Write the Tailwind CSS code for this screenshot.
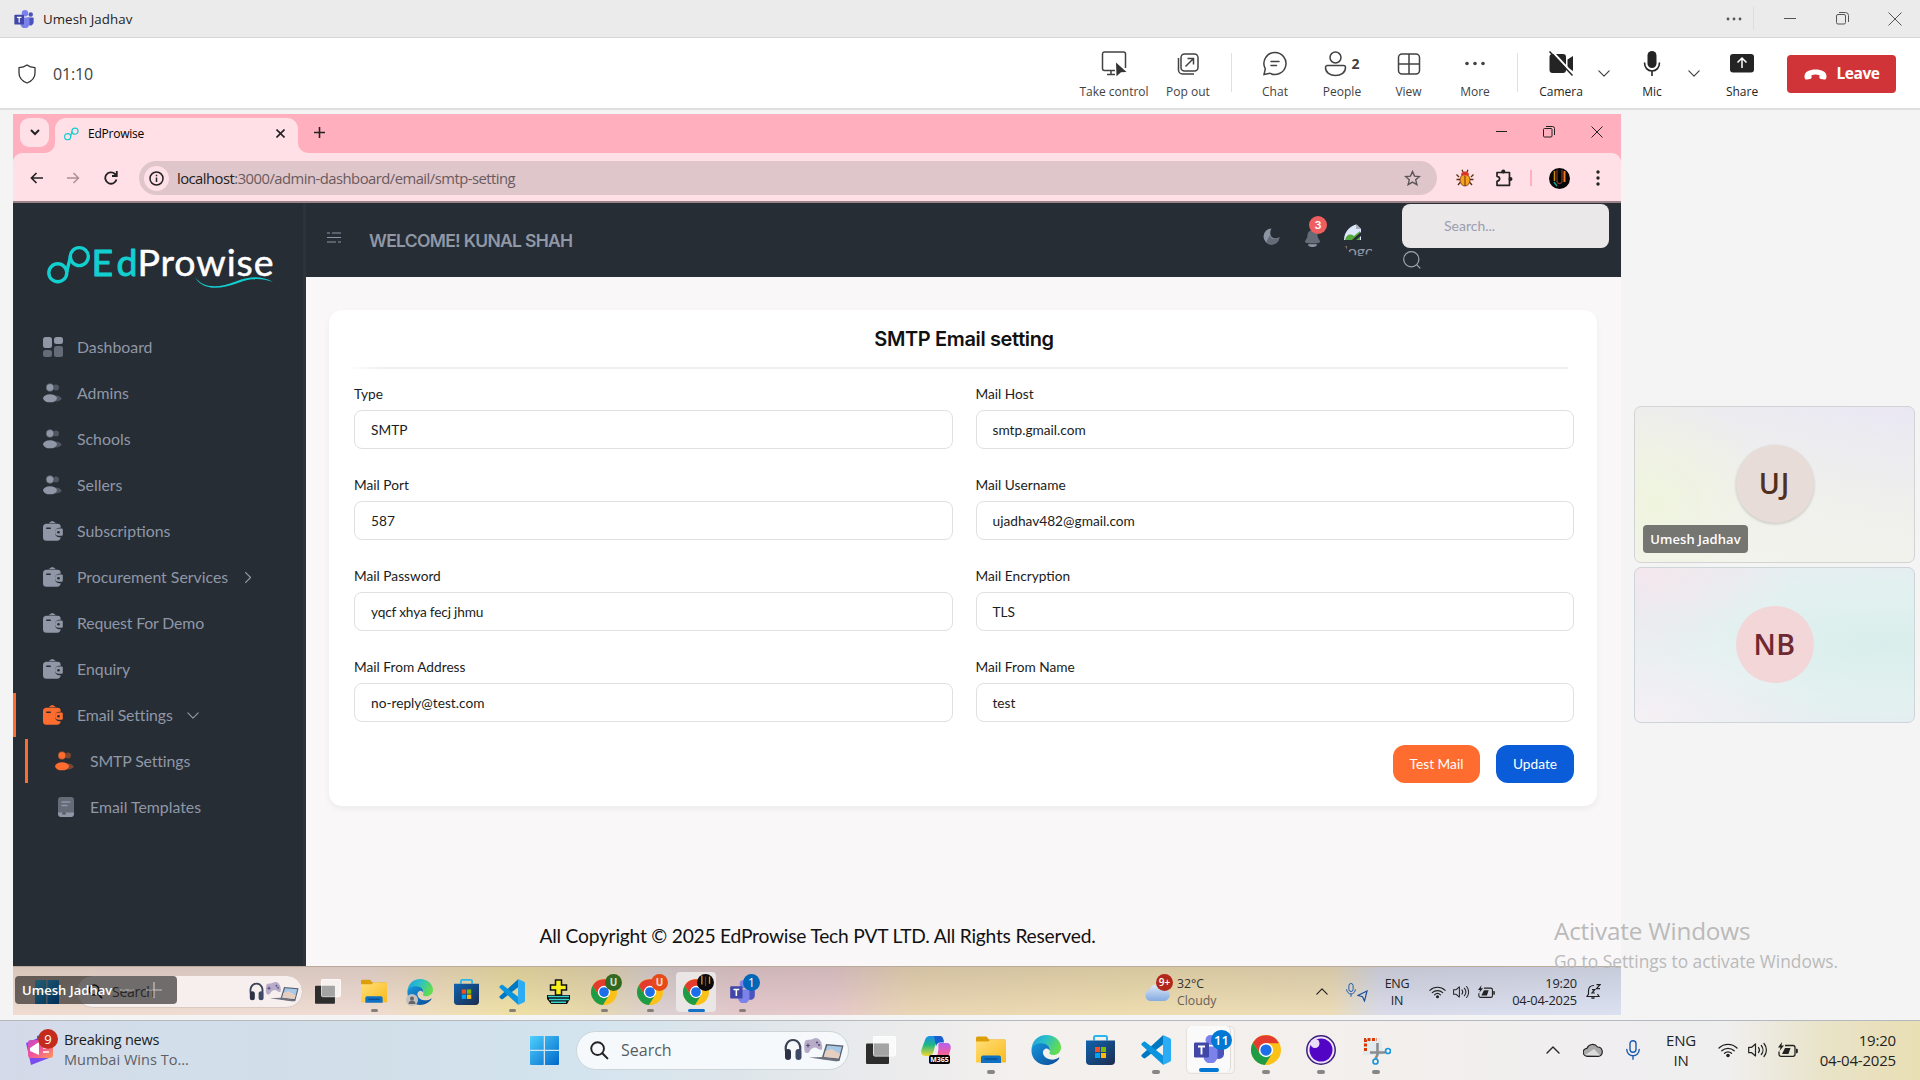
<!DOCTYPE html>
<html lang="en">
<head>
<meta charset="utf-8">
<title>Umesh Jadhav</title>
<script src="https://cdn.jsdelivr.net/npm/@tailwindcss/browser@4"></script>
</head>
<body class="w-[1920px] h-[1080px] overflow-hidden bg-[#f4f4f4] flex flex-col font-['Open_Sans',sans-serif] text-[#242424]">
<svg width="0" height="0" class="absolute">
  <defs>
    <linearGradient id="gWin" x1="0" y1="0" x2="1" y2="1"><stop offset="0" stop-color="#4fd0ff"/><stop offset="1" stop-color="#0067c9"/></linearGradient>
    <linearGradient id="gFold" x1="0" y1="0" x2="1" y2="1"><stop offset="0" stop-color="#ffdf7a"/><stop offset="1" stop-color="#fbba1c"/></linearGradient>
    <linearGradient id="gEdgeT" x1="0" y1="0" x2="1" y2=".4"><stop offset="0" stop-color="#1b9de2"/><stop offset=".5" stop-color="#2cc0c8"/><stop offset="1" stop-color="#62dc50"/></linearGradient>
    <linearGradient id="gEdgeB" x1="0" y1="0" x2="1" y2="1"><stop offset="0" stop-color="#1597dd"/><stop offset="1" stop-color="#0c4a97"/></linearGradient>
    <linearGradient id="gStore" x1="0" y1="0" x2="1" y2="1"><stop offset="0" stop-color="#0f63ad"/><stop offset="1" stop-color="#1d2c50"/></linearGradient>
    <linearGradient id="gCopA" x1="0" y1="0" x2="0" y2="1"><stop offset="0" stop-color="#1a8cf0"/><stop offset=".45" stop-color="#1eb980"/><stop offset="1" stop-color="#f5d62c"/></linearGradient>
    <linearGradient id="gCopB" x1="0" y1="0" x2="0" y2="1"><stop offset="0" stop-color="#b45ff0"/><stop offset=".5" stop-color="#ef5fa8"/><stop offset="1" stop-color="#ff8a3c"/></linearGradient>
    <linearGradient id="gNews" x1="0" y1="0" x2="1" y2="1"><stop offset="0" stop-color="#c44cc8"/><stop offset=".5" stop-color="#f2559a"/><stop offset="1" stop-color="#ff9a50"/></linearGradient>
    <linearGradient id="gCloud" x1="0" y1="0" x2="0" y2="1"><stop offset="0" stop-color="#dfeaf8"/><stop offset="1" stop-color="#84abe2"/></linearGradient>
  </defs>
  <symbol id="win" viewBox="0 0 29 29"><path fill="url(#gWin)" d="M0 1a1 1 0 0 1 1-1h12.7v13.7H0zM15 0h13a1 1 0 0 1 1 1v12.7H15zM0 15h13.7v14H1a1 1 0 0 1-1-1zM15 15h14v13a1 1 0 0 1-1 1H15z"/></symbol>
  <symbol id="mag" viewBox="0 0 20 20"><circle cx="8" cy="8" r="6.700" fill="none" stroke="#222" stroke-width="2"/><path d="M13 13l5.300 5.300" stroke="#222" stroke-width="2.200" stroke-linecap="round"/></symbol>
  <symbol id="gear" viewBox="0 0 60 26">
    <path d="M2.500 16C0 8 4 3 9 3s9 5 6.500 13" fill="none" stroke="#3b4255" stroke-width="2.200"/><rect x="1" y="12" width="6" height="11" rx="3" fill="#2d3345"/><rect x="11.500" y="12" width="6" height="11" rx="3" fill="#3f4a68"/>
    <path d="M21 4c2-2 4-1 6-1.500s4-2.500 7-1c3 1.500 5 7 4 11-2 1.500-5-2-7-2s-4 1-5.500 4c-1 2-4 2-4.800 0C20 12 20 7 21 4z" fill="#b7acc8"/><path d="M24 6.500v4M22 8.500h4" stroke="#5a4a80" stroke-width="1.200"/><circle cx="33" cy="5.500" r="1.100" fill="#5a4a80"/><circle cx="35" cy="8" r="1.100" fill="#5a4a80"/>
    <path d="M42 7l17.500 1.500-4 15.500-18-2z" fill="#5d6270"/><path d="M43.300 8.500l14.600 1.300-3.200 11.500-15-1.600z" fill="#a7c9e8"/><path d="M41.500 14l6-2 8.500 5-1.500 4.500-14.500-1.500z" fill="#e6cfc0"/><path d="M25 20.500l13-.5 17 3-2 1.500z" fill="#6f7380"/>
  </symbol>
  <symbol id="tview" viewBox="0 0 30 28"><rect y="7.500" width="23" height="20.500" rx="1" fill="#2d2d2d"/><rect x="7.500" width="22" height="20" rx="1.500" fill="#fff" fill-opacity=".72" stroke="#fff"/><rect x="7.500" y="7.500" width="15.500" height="12.500" fill="#8a8a8a" fill-opacity=".55"/></symbol>
  <symbol id="folder" viewBox="0 0 30 28"><path d="M0 2a1.500 1.500 0 0 1 1.500-1.500h9L13 3.500h15.500A1.500 1.500 0 0 1 30 5v6H0z" fill="#dc9f0a"/><path d="M0 5.500h12l3-2h13.500A1.500 1.500 0 0 1 30 5v21.500H0z" fill="url(#gFold)"/><path d="M5 27v-5.500a2 2 0 0 1 2-2h16a2 2 0 0 1 2 2V27z" fill="#0f71c4"/><path d="M8.500 23h13" stroke="#0b4c8f" stroke-width="1.400"/></symbol>
  <symbol id="edge" viewBox="0 0 30 30"><path d="M.5 16C.2 6 7 0 15.500 0 24 0 30 6 30 12.500c0 5-4 7.500-7.500 7.500-3 0-4.500-1-4-2.200C20.500 14 18 9.500 12 9.500 6 9.500 1 12 .5 16z" fill="url(#gEdgeT)"/><path d="M.5 16C.5 11 5 8.300 10 8.300c5.500 0 9.500 3.200 8.800 7.700C18 14 16 13 14 14c-4 2-2 9.500 5.500 10.500 3.500.5 6-.5 8-1.800.8-.4 1 .2.700.8C25.500 27.500 20.500 30 15.500 30 7.500 30 .5 24 .5 16z" fill="url(#gEdgeB)"/></symbol>
  <symbol id="store" viewBox="0 0 29 30"><path d="M8 5.500V2.500A1.500 1.500 0 0 1 9.500 1h10A1.500 1.500 0 0 1 21 2.500v3" fill="none" stroke="#29b6ef" stroke-width="2"/><path d="M0 5.500h29V26a4 4 0 0 1-4 4H4a4 4 0 0 1-4-4z" fill="url(#gStore)"/><path fill="#f25022" d="M9 12h5v5H9z"/><path fill="#7fba00" d="M15 12h5v5h-5z"/><path fill="#00a4ef" d="M9 18h5v5H9z"/><path fill="#ffb900" d="M15 18h5v5h-5z"/></symbol>
  <symbol id="code" viewBox="0 0 30 30"><path d="M22 .3L1 19.500c-.8.800-.8 1.700 0 2.400l1.500 1.200c.7.500 1.300.4 2 0L22 9.500z" fill="#0078c1"/><path d="M22 29.700L1 10.500c-.8-.8-.8-1.700 0-2.400l1.500-1.200c.7-.5 1.300-.4 2 0L22 20.500z" fill="#0a94de"/><path d="M22 0l7 3.200a2 2 0 0 1 1 1.700v20.200a2 2 0 0 1-1 1.700L22 30z" fill="#2bacf4"/></symbol>
  <symbol id="chrome" viewBox="0 0 24 24"><circle cx="12" cy="12" r="12" fill="#fbc116"/><path d="M1.600 6A12 12 0 0 0 11 24l5.800-9.300L12 12l-4.800 2.700z" fill="#1e9b45"/><path d="M1.600 6A12 12 0 0 1 22.400 6.500H12V12l-4.800 2.700z" fill="#e33b2e"/><circle cx="12" cy="12" r="5.700" fill="#fff"/><circle cx="12" cy="12" r="4.500" fill="#1c6fe8"/></symbol>
  <symbol id="teams" viewBox="0 0 30 28"><circle cx="25.500" cy="7" r="3.500" fill="#4b53bc"/><circle cx="16.500" cy="5" r="5" fill="#7b83eb"/><path d="M20 11.500h8.500A1.500 1.500 0 0 1 30 13v6.500a5 5 0 0 1-8 3.500z" fill="#4b53bc"/><path d="M9 11.500h14.500V21a7 7 0 0 1-14 1z" fill="#7b83eb"/><rect y="7.500" width="15" height="15" rx="1.300" fill="#4147a8"/><path d="M4 11.500h7M7.500 11.500v8" stroke="#fff" stroke-width="1.900"/></symbol>
  <symbol id="copilot" viewBox="0 0 30 28"><path d="M9 0h9c3 0 4 2 4.500 5H18c-3 0-3.500 3-4.500 7s-2 8-5.500 8H4c-3 0-4.500-3-3.500-6.500L4 4C5 1 6.500 0 9 0z" fill="url(#gCopA)"/><path d="M13 0h5.500c3 0 4 2 4.500 6.500h-4c-2 0-3 1-4 4z" fill="#1a5fd0"/><path d="M18.500 7H26c3 0 4.500 3 3.500 6.500L27 22c-1 3-2 4-4.500 4H12c4-1 4-6 5-10s-.5-9 1.500-9z" fill="url(#gCopB)"/></symbol>
  <symbol id="wifi" viewBox="0 0 20 16"><g fill="none" stroke="#222" stroke-width="1.300" stroke-linecap="round"><path d="M1 6a13 13 0 0 1 18 0M3.800 8.800a9 9 0 0 1 12.400 0M6.500 11.300a5.200 5.200 0 0 1 7 0"/></g><circle cx="10" cy="13.500" r="1.800" fill="#222"/></symbol>
  <symbol id="vol" viewBox="0 0 20 16"><g fill="none" stroke="#222" stroke-width="1.200" stroke-linecap="round" stroke-linejoin="round"><path d="M.7 5.300h3L7.500 2v12L3.700 10.700h-3zM10.500 5.500a4 4 0 0 1 0 5M13.300 3.500a7 7 0 0 1 0 9M16 1.500a10 10 0 0 1 0 13"/></g></symbol>
  <symbol id="bat" viewBox="0 0 20 16"><path d="M7 3.500h8a2 2 0 0 1 2 2v6.800a2 2 0 0 1-2 2H3a2 2 0 0 1-2-2V9.500" fill="none" stroke="#222" stroke-width="1.300"/><path d="M18 6.700h.8a1 1 0 0 1 1 1v2.600a1 1 0 0 1-1 1H18z" fill="#222"/><path d="M4 12l3-6h5.500L10.500 12z" fill="#222"/><path d="M4 0L0 5.500h2.500L1.500 9 6 3.500H3.500z" fill="#222"/></symbol>
  <symbol id="micb" viewBox="0 0 14 20"><rect x="4" y=".7" width="6" height="11.500" rx="3" fill="none" stroke="#1d5bb0" stroke-width="1.400"/><path d="M.8 9.500a6.200 6.200 0 0 0 12.400 0M7 15.800v3.500" fill="none" stroke="#1d5bb0" stroke-width="1.400" stroke-linecap="round"/></symbol>
  <symbol id="users" viewBox="0 0 20 20"><circle cx="13" cy="4.500" r="3" fill="currentColor" opacity=".4"/><ellipse cx="12.500" cy="15.500" rx="6" ry="3" fill="currentColor" opacity=".4"/><circle cx="7" cy="4.500" r="3.900" fill="currentColor" stroke="#262d34" stroke-width=".4"/><ellipse cx="7" cy="15.300" rx="6.900" ry="4" fill="currentColor"/></symbol>
  <symbol id="wallet" viewBox="0 0 20 20"><path d="M5.500 2.200L8.200.4a2 2 0 0 1 2.200 0l2.700 1.800z" fill="currentColor"/><path d="M3.500 2.700h11a3.200 3.200 0 0 1 3.200 3.200v.8h-1.800a4.900 4.900 0 0 0 0 9.600h1.800a3.800 3.800 0 0 1-3.700 3.500H3.500A3.500 3.500 0 0 1 0 16.300V6.200a3.500 3.500 0 0 1 3.500-3.500z" fill="currentColor"/><rect x="3" y="6.400" width="5" height="1.600" rx=".8" fill="#262d34"/><path d="M15.600 7.600h3.200a1 1 0 0 1 1 1v5.200a1 1 0 0 1-1 1h-3.200a3.600 3.600 0 0 1 0-7.200z" fill="currentColor"/><circle cx="15.500" cy="11.200" r="1.300" fill="#262d34"/></symbol>
  <symbol id="inf" viewBox="0 0 44 40"><g fill="none" stroke="#12cfd0" stroke-width="3.400"><circle cx="10.800" cy="27.800" r="9"/><circle cx="32.300" cy="11.600" r="9"/><path d="M19.800 27c.5-4.500 2.700-9.500 3.700-16"/></g></symbol>
  <symbol id="chev" viewBox="0 0 14 8"><path d="M1 1l6 6 6-6" fill="none" stroke="currentColor" stroke-width="1.400" stroke-linecap="round" stroke-linejoin="round"/></symbol>
</svg>

<!-- Window title bar -->
<header class="h-[38px] shrink-0 bg-[#ebebeb] border-b border-[#d6d6d6] flex items-center pl-[14px]">
  <svg class="w-5 h-[18px]"><use href="#teams"/></svg>
  <span class="ml-[9px] mt-[2px] text-[13.300px] tracking-[0.004em]">Umesh Jadhav</span>
  <div class="ml-auto flex items-center text-[#555]">
    <svg width="16" height="4" viewBox="0 0 16 4" fill="#555"><circle cx="2" cy="2" r="1.400"/><circle cx="8" cy="2" r="1.400"/><circle cx="14" cy="2" r="1.400"/></svg>
    <div class="w-px h-[23px] bg-[#dcdcdc] ml-[11px]"></div>
    <svg class="ml-[30px]" width="12" height="12" viewBox="0 0 12 12"><path d="M0 5.500h12" stroke="#555"/></svg>
    <svg class="ml-[40px]" width="13" height="13" viewBox="0 0 13 13" fill="none" stroke="#555"><rect x=".5" y="2.500" width="9" height="9.500" rx="1.500"/><path d="M3 .5h6.500a3 3 0 0 1 3 3V10"/></svg>
    <svg class="ml-[39px] mr-[18px]" width="14" height="14" viewBox="0 0 14 14" stroke="#555"><path d="M.5.500l13 13M13.500.500l-13 13"/></svg>
  </div>
</header>

<!-- Call controls -->
<div class="h-[72px] shrink-0 bg-white border-b-2 border-[#dedede] flex items-center pl-[18px] pt-[2px]">
  <svg width="18" height="20" viewBox="0 0 18 20" fill="none" stroke="#333" stroke-width="1.300"><path d="M9 1c2.200 1.700 4.500 2.500 8 2.700V9c0 5-3 8-8 10-5-2-8-5-8-10V3.700C4.500 3.500 6.800 2.700 9 1z" stroke-linejoin="round"/></svg>
  <span class="ml-[17px] text-[16px] tracking-[-0.01em] text-[#424242]">01:10</span>
  <div class="ml-auto mt-[2px] flex text-[12px] leading-4 text-[#424242]">
    <div class="w-[80px] flex flex-col items-center gap-[7px]">
      <svg width="26" height="26" viewBox="0 0 26 26"><path d="M14 19.500H3.500a2 2 0 0 1-2-2V3a2 2 0 0 1 2-2h19a2 2 0 0 1 2 2v14M6 23.500h8M10 20v3.500" fill="none" stroke="#424242" stroke-width="1.500"/><path d="M15 11.500l10.500 9.500-5.500.3-4.500 4z" fill="#333"/></svg>
      <span>Take control</span></div>
    <div class="w-[68px] flex flex-col items-center gap-[7px]">
      <svg width="26" height="26" viewBox="0 0 26 26" fill="none" stroke="#424242" stroke-width="1.500"><rect x="6" y="3" width="17" height="17" rx="3.500"/><path d="M3.500 7v12a4 4 0 0 0 4 4H19M10.500 15.500l8-8M12.500 7.500h6v6"/></svg>
      <span>Pop out</span></div>
    <div class="w-px h-[39px] bg-[#e0e0e0] mx-[9px] mt-[2px]"></div>
    <div class="w-[68px] flex flex-col items-center gap-[7px]">
      <svg width="26" height="26" viewBox="0 0 26 26" fill="none" stroke="#424242" stroke-width="1.500"><path d="M13 1.500a11 11 0 1 1-5.200 20.700L2 23.500l1.300-5.700A11 11 0 0 1 13 1.500zM9 10.500h8M9 14.500h5.500" stroke-linecap="round"/></svg>
      <span>Chat</span></div>
    <div class="w-[66px] flex flex-col items-center gap-[7px]">
      <div class="flex items-center h-[26px]"><svg width="23" height="26" viewBox="0 0 23 26" fill="none" stroke="#424242" stroke-width="1.500"><circle cx="11.500" cy="6.500" r="5.500"/><path d="M3.500 14.500h16a2 2 0 0 1 2 2c0 5-4.500 8-10 8s-10-3-10-8a2 2 0 0 1 2-2z"/></svg><b class="font-bold text-[14px] ml-1">2</b></div>
      <span>People</span></div>
    <div class="w-[67px] flex flex-col items-center gap-[7px]">
      <svg width="26" height="26" viewBox="0 0 26 26" fill="none" stroke="#424242" stroke-width="1.500"><rect x="2.500" y="3" width="21" height="20" rx="3.500"/><path d="M13 3v20M2.500 13h21"/></svg>
      <span>View</span></div>
    <div class="w-[66px] flex flex-col items-center gap-[7px]">
      <svg width="26" height="26" viewBox="0 0 26 26" fill="#424242"><circle cx="5" cy="12.500" r="1.800"/><circle cx="13" cy="12.500" r="1.800"/><circle cx="21" cy="12.500" r="1.800"/></svg>
      <span>More</span></div>
    <div class="w-px h-[39px] bg-[#e0e0e0] mx-[9px] mt-[2px]"></div>
    <div class="w-[68px] flex flex-col items-center gap-[7px] text-[#242424]">
      <svg width="26" height="26" viewBox="0 0 26 26"><path d="M4.500 3H15a3 3 0 0 1 3 3v13a3 3 0 0 1-3 3H4.500a3 3 0 0 1-3-3V6a3 3 0 0 1 3-3zM19.500 8.500L25 5v15l-5.500-3.500z" fill="#242424"/><path d="M3-1l23 25" stroke="#fff" stroke-width="2"/><path d="M1.500.500l23 24" stroke="#242424" stroke-width="1.500"/></svg>
      <span>Camera</span></div>
    <svg class="w-3 h-[7px] mt-[19px] ml-[3px]"><use href="#chev"/></svg>
    <div class="w-[60px] ml-[12px] flex flex-col items-center gap-[7px] text-[#242424]">
      <svg width="26" height="26" viewBox="0 0 26 26"><rect x="8.500" y="0" width="9" height="17" rx="4.500" fill="#242424"/><path d="M5.500 11.500c0 5 3 8.500 7.500 8.500s7.500-3.500 7.500-8.500M13 20v5" fill="none" stroke="#242424" stroke-width="1.600"/></svg>
      <span>Mic</span></div>
    <svg class="w-3 h-[7px] mt-[19px] ml-[6px]"><use href="#chev"/></svg>
    <div class="w-[60px] ml-[12px] flex flex-col items-center gap-[7px] text-[#242424]">
      <svg width="26" height="26" viewBox="0 0 26 26"><rect x="1" y="3" width="24" height="18.500" rx="3" fill="#242424"/><path d="M13 17V7.500M8.500 11.500L13 7l4.500 4.500" fill="none" stroke="#fff" stroke-width="1.500"/></svg>
      <span>Share</span></div>
  </div>
  <button class="ml-[15px] mr-[24px] w-[109px] h-[38px] rounded-[4px] bg-[#d13438] text-white font-bold text-[15.500px] tracking-[-0.03em] flex items-center justify-center gap-[10px]">
    <svg width="23" height="11" viewBox="0 0 23 11"><path d="M.5 7.500C.5 2.500 5.500.500 11.500.500s11 2 11 7c0 2.500-1 3.300-2.500 3l-3-.6c-1.200-.3-1.700-1-1.600-2l.1-1.700a12 12 0 0 0-8 0l.1 1.700c.1 1-.4 1.700-1.600 2l-3 .6C1.500 10.800.5 10 .5 7.500z" fill="#fff"/></svg>
    Leave</button>
</div>

<!-- Stage: shared screen and participants -->
<main class="h-[910px] shrink-0 flex pt-[4px] pl-[13px]">
  <section class="w-[1608px] h-[901px] shrink-0 flex flex-col relative">
    <!-- Browser tab strip -->
    <div class="h-[39px] shrink-0 bg-[#ffafbe] flex items-center pl-[7px] pr-[18px] text-black">
      <div class="w-[29px] h-[29px] rounded-[9px] bg-[#ffe0e6] flex items-center justify-center mt-[-2px]"><svg width="10" height="7" viewBox="0 0 10 7"><path d="M1 1l4 4 4-4" fill="none" stroke="#222" stroke-width="2"/></svg></div>
      <div class="relative w-[243px] h-[35px] ml-[6px] self-end rounded-t-[11px] bg-[#ffe0e6] flex items-center px-[9px] pb-1">
        <svg class="absolute left-[-10px] bottom-0" width="10" height="10"><path d="M10 0v10H0A10 10 0 0 0 10 0z" fill="#ffe0e6"/></svg>
        <svg class="absolute right-[-10px] bottom-0" width="10" height="10"><path d="M0 0v10h10A10 10 0 0 1 0 0z" fill="#ffe0e6"/></svg>
        <svg class="w-[15px] h-[14px]"><use href="#inf"/></svg>
        <span class="ml-[9px] text-[12px] tracking-[-0.02em]">EdProwise</span>
        <svg class="ml-auto mr-[4px]" width="9" height="9" viewBox="0 0 9 9" stroke="#222" stroke-width="1.600"><path d="M.5.500l8 8M8.500.500l-8 8"/></svg>
      </div>
      <svg class="ml-[16px] mt-[-2px]" width="11" height="11" viewBox="0 0 11 11" stroke="#222" stroke-width="1.600"><path d="M5.500 0v11M0 5.500h11"/></svg>
      <div class="ml-auto flex items-center gap-[36px] mt-[-3px]">
        <svg width="11" height="11" viewBox="0 0 11 11" stroke="#222"><path d="M0 4.500h11"/></svg>
        <svg width="12" height="12" viewBox="0 0 12 12" fill="none" stroke="#222"><rect x=".5" y="2.500" width="8.500" height="8.500" rx="1"/><path d="M3 .5h6.500a2 2 0 0 1 2 2V9"/></svg>
        <svg width="12" height="12" viewBox="0 0 12 12" stroke="#222"><path d="M.5.500l11 11M11.500.500l-11 11"/></svg>
      </div>
    </div>
    <!-- Address bar -->
    <div class="h-[50px] shrink-0 bg-[#ffafbe]"><div class="h-[50px] rounded-t-[9px] bg-[#ffe0e6] border-b-2 border-[#9c8389] flex items-center pl-[17px] pr-[21px] pt-[2px]">
      <svg width="13" height="12" viewBox="0 0 13 12" fill="none" stroke="#222" stroke-width="1.700"><path d="M13 6H1.500M6.500 1l-5 5 5 5"/></svg>
      <svg class="ml-[24px]" width="13" height="12" viewBox="0 0 13 12" fill="none" stroke="#b08f96" stroke-width="1.500"><path d="M0 6h11.500M6.500 1l5 5-5 5"/></svg>
      <svg class="ml-[24px]" width="14" height="14" viewBox="0 0 14 14" fill="none" stroke="#222" stroke-width="1.800"><path d="M12.500 8.500A5.700 5.700 0 1 1 11 3l1.500 1.500M12.800 0v5H8"/></svg>
      <div class="ml-[21px] w-[1299px] h-[34px] rounded-full bg-[#dfc6ca] flex items-center pl-[5px] pr-[16px]">
        <div class="w-[25px] h-[25px] rounded-full bg-[#ffe0e6] flex items-center justify-center"><svg width="15" height="15" viewBox="0 0 15 15"><circle cx="7.500" cy="7.500" r="6.500" fill="none" stroke="#222" stroke-width="1.500"/><path d="M7.500 6.500V11M7.500 3.800v1.500" stroke="#222" stroke-width="1.500"/></svg></div>
        <span class="ml-[8px] text-[14.800px] tracking-[-0.035em] text-[#6a5a5e]"><span class="text-[#222]">localhost</span>:3000/admin-dashboard/email/smtp-setting</span>
        <svg class="ml-auto" width="17" height="16" viewBox="0 0 17 16" fill="none" stroke="#5c5558" stroke-width="1.400"><path d="M8.500 1.500l2 4.600 5 .4-3.800 3.300 1.200 4.900-4.400-2.600-4.400 2.600 1.200-4.900L1.500 6.500l5-.4z"/></svg>
      </div>
      <svg class="ml-[19px]" width="18" height="18" viewBox="0 0 18 18"><path d="M3 8L.5 5.500M15 8l2.500-2.500M4 10.500H.5M14 10.500h3.500M4.500 13L2 16M13.500 13l2.500 3M7 3L6 .8M11 3l1-2.200" stroke="#5a2d12" stroke-width="1.300"/><ellipse cx="9" cy="11" rx="5" ry="6" fill="#f6a01e" stroke="#6b3410" stroke-width=".8"/><path d="M5 6.500a4 4 0 0 1 8 0z" fill="#d8362a"/><path d="M9 7v10" stroke="#6b3410"/></svg>
      <svg class="ml-[21px]" width="18" height="18" viewBox="0 0 18 18"><path d="M2 3.500h12.500v12.800H2v-4c3.500-.6 3.500-4.500 0-5z" fill="none" stroke="#222" stroke-width="1.700" stroke-linejoin="round"/><circle cx="8.300" cy="2.500" r="2" fill="#222"/><circle cx="15.500" cy="10" r="2" fill="#222"/></svg>
      <div class="ml-[17px] w-[2px] h-[16px] bg-[#ffafbe]"></div>
      <svg class="ml-[17px]" width="21" height="21" viewBox="0 0 21 21"><circle cx="10.500" cy="10.500" r="10.500" fill="#090909"/><path d="M5.500 3v10" stroke="#c98a12" stroke-width="1.500"/><path d="M8 2v11a2.500 2.500 0 0 0 5 0V2" fill="none" stroke="#7c3a22" stroke-width="1.200"/><path d="M9 5v8a1.500 1.500 0 0 0 3 0V5z" fill="#000"/><path d="M15.500 3v11" stroke="#f0781c" stroke-width="2"/><path d="M5 14l3 4" stroke="#189a9a" stroke-width="1.500"/></svg>
      <svg class="ml-[26px]" width="4" height="16" viewBox="0 0 4 16" fill="#222"><circle cx="2" cy="2" r="1.700"/><circle cx="2" cy="8" r="1.700"/><circle cx="2" cy="14" r="1.700"/></svg>
    </div></div>

    <!-- Web page -->
    <div class="h-[763px] shrink-0 flex bg-[#f9f7f8] font-['Lato',sans-serif]">
      <nav class="w-[293px] shrink-0 bg-[#262d34] border-r-[3px] border-[#2d323b] text-[#9097a7] text-[15.850px]">
        <svg class="block ml-[34px] mt-[42px]" width="230" height="46" viewBox="0 0 230 46">
          <use href="#inf" width="44" height="40"/>
          <g font-family="Lato" font-size="37.500" stroke-linejoin="round"><text x="44.500" y="30.500" textLength="46" fill="#12cfd0" stroke="#12cfd0">Ed</text><text x="90.500" y="30.500" textLength="136" fill="#fff" stroke="#fff" stroke-width=".5">Prowise</text></g>
          <path d="M148 32c8 11 22 12 42 4 14-5 25-5 36 1-12-4-22-4-35 1-21 8-37 6-43-6z" fill="#12cfd0"/>
        </svg>
        <ul class="mt-[33px] flex flex-col">
          <li class="h-[46px] flex items-center pl-[30px] gap-[14px]"><svg width="20" height="20" viewBox="0 0 20 20"><rect width="9" height="11" rx="2.500" fill="#9097a7"/><rect x="11" width="9" height="7" rx="2.500" fill="#9097a7"/><rect y="13" width="9" height="7" rx="2.500" fill="#656b77"/><rect x="11" y="9" width="9" height="11" rx="2.500" fill="#656b77"/></svg>Dashboard</li>
          <li class="h-[46px] flex items-center pl-[30px] gap-[14px]"><svg class="w-5 h-5"><use href="#users"/></svg>Admins</li>
          <li class="h-[46px] flex items-center pl-[30px] gap-[14px]"><svg class="w-5 h-5"><use href="#users"/></svg>Schools</li>
          <li class="h-[46px] flex items-center pl-[30px] gap-[14px]"><svg class="w-5 h-5"><use href="#users"/></svg>Sellers</li>
          <li class="h-[46px] flex items-center pl-[30px] gap-[14px]"><svg class="w-5 h-5"><use href="#wallet"/></svg>Subscriptions</li>
          <li class="h-[46px] flex items-center pl-[30px] gap-[14px]"><svg class="w-5 h-5"><use href="#wallet"/></svg>Procurement Services<svg class="w-[12px] h-[7px] -rotate-90"><use href="#chev"/></svg></li>
          <li class="h-[46px] flex items-center pl-[30px] gap-[14px] tracking-[-0.01em]"><svg class="w-5 h-5"><use href="#wallet"/></svg>Request For Demo</li>
          <li class="h-[46px] flex items-center pl-[30px] gap-[14px]"><svg class="w-5 h-5"><use href="#wallet"/></svg>Enquiry</li>
          <li class="h-[46px] flex items-center"><div class="w-[3px] h-[44px] bg-[#ff6c2f] mr-[27px]"></div><svg class="w-5 h-5 mr-[14px] text-[#ff6c2f]"><use href="#wallet"/></svg><span class="tracking-[-0.008em]">Email Settings</span><svg class="w-[12px] h-[7px] ml-[14px]"><use href="#chev"/></svg></li>
          <li class="h-[46px] flex items-center pl-[12px]"><div class="w-[3px] h-[44px] bg-[#ff6c2f] mr-[27px]"></div><svg class="w-5 h-5 mr-[15px] text-[#ff6c2f]"><use href="#users"/></svg><span class="tracking-[-0.008em]">SMTP Settings</span></li>
          <li class="h-[46px] flex items-center pl-[43px] gap-[14px]"><svg width="20" height="20" viewBox="0 0 20 20"><path d="M5 0h10a3 3 0 0 1 3 3v13H2V3a3 3 0 0 1 3-3z" fill="#656b77"/><path d="M2 15.500h16V17a3 3 0 0 1-3 3H5a3 3 0 0 1-3-3z" fill="#9097a7"/><path d="M5.500 5h9M5.500 8.500h6" stroke="#9097a7" stroke-width="1.300"/><path d="M6.500 15.500v2.500l1.500-1 1.500 1v-2.500z" fill="#4a505a"/></svg>Email Templates</li>
        </ul>
      </nav>
      <div class="flex-1 flex flex-col">
        <div class="h-[74px] shrink-0 bg-[#262d34] flex items-start pl-[21px] pr-[12px]">
          <svg class="mt-[29px]" width="14" height="11" viewBox="0 0 14 11" stroke="#8d94a4" stroke-width="1.200"><path d="M0 1h3M5 1h9M0 5.500h14M0 10h9M11 10h3"/></svg>
          <span class="ml-[28px] mt-[24px] leading-7 font-['Inter',sans-serif] font-semibold text-[17.500px] tracking-[-0.04em] text-[#9097a7]">WELCOME! KUNAL SHAH</span>
          <svg class="ml-auto mt-[25px]" width="17" height="17" viewBox="0 0 17 17"><path d="M8.500.5a8 8 0 1 0 8 8.500c-5.500 4-12-1-8-8.500z" fill="#8d94a4"/><path d="M3 14.500a8 8 0 0 0 13.500-5.500c-4 3.500-9 2-9.500-2z" fill="#656b77"/></svg>
          <div class="relative ml-[25px] mt-[27px]">
            <svg width="15" height="17" viewBox="0 0 15 17"><path d="M7.500 0a5 5 0 0 1 5 5.500c0 3 2.500 4 2.500 6 0 1.300-1.500 2-7.500 2s-7.500-.7-7.500-2c0-2 2.500-3 2.500-6A5 5 0 0 1 7.500 0z" fill="#656b77"/><path d="M3 14.300h9a4.500 2.700 0 0 1-9 0z" fill="#9097a7"/></svg>
            <span class="absolute left-[4px] top-[-14px] w-[18px] h-[18px] rounded-full bg-[#ef5f5f] text-white text-[11px] font-semibold leading-[18px] text-center font-['Inter',sans-serif]">3</span>
          </div>
          <div class="ml-[24px] mt-[21px] w-[32px] h-[32px] rounded-full overflow-hidden text-[16px] leading-[20px] text-[#9097a7]">
            <svg class="block" width="18" height="17" viewBox="0 0 18 17"><path d="M0 0h12l5 5v11H0z" fill="#dce7fb"/><path d="M1 16c1-5 5-7 9-4l6-5v9z" fill="#56a93c"/><path d="M8 16l9-8v4l-5 4z" fill="#262d34"/><path d="M12 0v5h5z" fill="#a9b0ba"/></svg>
            <span>logo</span>
          </div>
          <div class="ml-[26px] mt-px w-[207px]">
            <div class="h-[44px] rounded-[8px] bg-[#eae8e9] pl-[42px] leading-[43px] text-[14px] text-[#9a9db0]">Search...</div>
            <svg class="mt-[3px] ml-px" width="18" height="18" viewBox="0 0 18 18" fill="none" stroke="#a2a7b4" stroke-width="1.200"><circle cx="8.300" cy="8.300" r="7.600"/><path d="M13.800 13.800l3.500 3.500"/></svg>
          </div>
        </div>
        <div class="ml-[23px] mr-[24px] mt-[33px] h-[496px] rounded-[13px] bg-white shadow-[0_3px_6px_rgba(0,0,0,0.05)] pl-[25px] pr-[23px] text-[13.700px] leading-5 text-[#1a1d22]">
          <h1 class="h-[57px] pt-[1px] leading-[57px] text-center font-['Inter',sans-serif] font-semibold text-[20px] tracking-[-0.018em] text-[#111]">SMTP Email setting</h1>
          <div class="h-[2px] ml-[-8px] mr-[6px] bg-linear-to-r from-white via-[#f0f0f1] via-3% to-[#f0f0f1]"></div>
          <div class="grid grid-cols-2 gap-x-[23px] gap-y-[26px] mt-[15px]">
            <label>Type<div class="mt-[6px] h-[39px] border border-[#dee0e4] rounded-[8px] px-4 leading-[37px]">SMTP</div></label>
            <label>Mail Host<div class="mt-[6px] h-[39px] border border-[#dee0e4] rounded-[8px] px-4 leading-[37px]">smtp.gmail.com</div></label>
            <label>Mail Port<div class="mt-[6px] h-[39px] border border-[#dee0e4] rounded-[8px] px-4 leading-[37px]">587</div></label>
            <label>Mail Username<div class="mt-[6px] h-[39px] border border-[#dee0e4] rounded-[8px] px-4 leading-[37px]">ujadhav482@gmail.com</div></label>
            <label>Mail Password<div class="mt-[6px] h-[39px] border border-[#dee0e4] rounded-[8px] px-4 leading-[37px] tracking-[-0.013em]">yqcf xhya fecj jhmu</div></label>
            <label>Mail Encryption<div class="mt-[6px] h-[39px] border border-[#dee0e4] rounded-[8px] px-4 leading-[37px]">TLS</div></label>
            <label>Mail From Address<div class="mt-[6px] h-[39px] border border-[#dee0e4] rounded-[8px] px-4 leading-[37px]">no-reply@test.com</div></label>
            <label>Mail From Name<div class="mt-[6px] h-[39px] border border-[#dee0e4] rounded-[8px] px-4 leading-[37px]">test</div></label>
          </div>
          <div class="flex justify-end gap-4 mt-[23px] text-white">
            <button class="w-[87px] h-[38px] rounded-[12px] bg-[#ff6c2f]">Test Mail</button>
            <button class="w-[78px] h-[38px] rounded-[12px] bg-[#0b5cd8]">Update</button>
          </div>
        </div>
        <p class="mt-[115px] text-center pr-[292px] text-[19.200px] leading-[30px] tracking-[-0.011em] text-[#111]">All Copyright © 2025 EdProwise Tech PVT LTD. All Rights Reserved.</p>
      </div>
    </div>

    <!-- Taskbar inside the shared screen -->
    <div class="relative h-[49px] shrink-0 border-t border-[#b9aa9c] bg-[linear-gradient(90deg,#f0dcd0_0%,#efdcd4_22%,#efe0a6_31%,#e8d9ae_36%,#ddd2d2_40%,#e4c9cc_45%,#e6cacc_51%,#ead6b5_56%,#eeddb0_70%,#ecdcb8_82%,#d9dbe9_85%,#dce1f2_100%)] text-[12px] leading-4">
      <div class="absolute inset-0 bg-linear-to-b from-black/10 to-transparent"></div>
      <div class="relative flex items-center w-full h-full pt-px">
        <svg class="w-6 h-6 ml-[22px]"><use href="#win"/></svg>
        <div class="ml-[17px] w-[227px] h-[33px] rounded-full bg-[#f6efed] border border-[#d8c9c3] flex items-center pl-[11px] pr-[3px] text-[14px] text-[#555]"><svg class="w-[15px] h-[15px]"><use href="#mag"/></svg><span class="ml-[9px] tracking-[-0.02em]">Search</span><svg class="w-[50px] h-[22px] ml-auto"><use href="#gear"/></svg></div>
        <div class="ml-[2px] flex">
          <div class="w-[46px] h-[40px] flex items-center justify-center"><svg class="w-[26px] h-[25px]"><use href="#tview"/></svg></div>
          <div class="relative w-[46px] h-[40px] flex items-center justify-center"><svg class="w-[26px] h-[25px]"><use href="#folder"/></svg><i class="absolute bottom-0 w-[7px] h-[3px] rounded bg-[#857f77]"></i></div>
          <div class="relative w-[46px] h-[40px] flex items-center justify-center"><svg class="w-[26px] h-[26px]"><use href="#edge"/></svg><svg class="absolute left-[9px] top-[22px]" width="12" height="12"><circle cx="6" cy="6" r="6" fill="#c4c2c0"/><circle cx="6" cy="4.500" r="2" fill="#666"/><path d="M2.500 10a3.500 3.500 0 0 1 7 0z" fill="#666"/></svg></div>
          <div class="w-[46px] h-[40px] flex items-center justify-center"><svg class="w-[25px] h-[26px]"><use href="#store"/></svg></div>
          <div class="relative w-[46px] h-[40px] flex items-center justify-center"><svg class="w-[26px] h-[26px]"><use href="#code"/></svg><i class="absolute bottom-0 w-[7px] h-[3px] rounded bg-[#857f77]"></i></div>
          <div class="w-[46px] h-[40px] flex items-center justify-center"><svg width="25" height="26" viewBox="0 0 25 26"><path d="M1 16h23v4l-3 5H5l-4-5z" fill="#111"/><path d="M2 17.500h21M3 20.500h20M5 23.300h15" stroke="#35d6d6" stroke-width="1.600"/><path d="M9.500 1h6v5h5v5h-5v5h-6v-5h-5V6h5z" fill="#f7ee1c" stroke="#111" stroke-width="1.500"/></svg></div>
          <div class="relative w-[46px] h-[40px] flex items-center justify-center"><svg class="w-[26px] h-[26px]"><use href="#chrome"/></svg><span class="absolute left-[24px] top-[2px] w-[17px] h-[17px] rounded-full bg-[#33691e] text-white/80 text-[10px] font-bold leading-[17px] text-center">U</span><i class="absolute bottom-0 w-[7px] h-[3px] rounded bg-[#857f77]"></i></div>
          <div class="relative w-[46px] h-[40px] flex items-center justify-center"><svg class="w-[26px] h-[26px]"><use href="#chrome"/></svg><span class="absolute left-[24px] top-[2px] w-[17px] h-[17px] rounded-full bg-[#e64a19] text-white/80 text-[10px] font-bold leading-[17px] text-center">U</span><i class="absolute bottom-0 w-[7px] h-[3px] rounded bg-[#857f77]"></i></div>
          <div class="relative w-[40px] mx-[3px] h-[40px] rounded-[4px] bg-[#eae6e6] flex items-center justify-center"><svg class="w-[26px] h-[26px]"><use href="#chrome"/></svg><svg class="absolute left-[21px] top-[2px]" width="17" height="17" viewBox="0 0 21 21"><circle cx="10.500" cy="10.500" r="10.500" fill="#0b0b0b"/><path d="M6 2v11M15.500 3v9" stroke="#e08a18" stroke-width="1.700"/><path d="M10.500 3v12" stroke="#8a2c22" stroke-width="1.500"/></svg><i class="absolute bottom-0 w-[17px] h-[3px] rounded bg-[#1272c8]"></i></div>
          <div class="relative w-[46px] h-[40px] flex items-center justify-center"><svg class="w-[25px] h-[23px]"><use href="#teams"/></svg><span class="absolute left-[24px] top-[2px] w-[17px] h-[17px] rounded-full bg-[#0067b8] text-white text-[12px] leading-[17px] text-center">1</span><i class="absolute bottom-0 w-[7px] h-[3px] rounded bg-[#857f77]"></i></div>
        </div>
        <div class="relative ml-[379px]"><svg width="26" height="18" viewBox="0 0 26 18"><path d="M6 18a6 6 0 0 1-.5-11.500A7.500 7.500 0 0 1 19.500 6 6 6 0 0 1 20 18z" fill="url(#gCloud)"/></svg><span class="absolute left-[12px] top-[-9px] w-[17px] h-[17px] rounded-full bg-[#b3261a] text-white text-[10px] font-semibold leading-[17px] text-center">9+</span></div>
        <div class="ml-[7px] leading-[17px] text-[12.300px] text-[#333]">32°C<br><span class="text-[#66605a]">Cloudy</span></div>
        <svg class="ml-auto w-[12px] h-[7px] rotate-180"><use href="#chev"/></svg>
        <svg class="ml-[18px] w-[10px] h-[14px] -mt-1"><use href="#micb"/></svg>
        <svg class="ml-px mt-2" width="11" height="12" viewBox="0 0 11 12"><path d="M10 1L1 5.500l4.500 1.200L7.500 11z" fill="none" stroke="#1d4f9a" stroke-width="1.200"/></svg>
        <div class="ml-[14px] w-[30px] text-center leading-[17px] text-[12.500px] tracking-[-0.02em]">ENG<br>IN</div>
        <svg class="ml-[17px] w-[17px] h-[14px]"><use href="#wifi"/></svg>
        <svg class="ml-[7px] w-[17px] h-[14px]"><use href="#vol"/></svg>
        <svg class="ml-[8px] w-[17px] h-[14px]"><use href="#bat"/></svg>
        <div class="ml-[6px] w-[76px] text-right leading-[17px] text-[12.800px] tracking-[-0.015em]">19:20<br>04-04-2025</div>
        <svg class="ml-[9px] mr-[20px]" width="15" height="16" viewBox="0 0 15 16"><path d="M8 1.500C4 1.500 2.500 4 2.500 7v3L1 12.500h12L11.500 10M5.500 13.500a2 2 0 0 0 3 0" fill="none" stroke="#222" stroke-width="1.200"/><path d="M10.500.7h3.500l-3.500 4H14M6 5.700h2.800L6 9h2.800" fill="none" stroke="#222" stroke-width="1.200"/></svg>
      </div>
      <div class="absolute left-[2px] top-[9px] w-[162px] h-[28px] rounded-[4px] bg-black/55 text-white font-semibold text-[13px] leading-[29px] pl-[7px]"><span class="tracking-[0.003em]">Umesh Jadhav</span><svg class="absolute left-[105px] top-[6px]" width="42" height="16" viewBox="0 0 42 16" stroke="#c9c4c1" stroke-width="1.200"><path d="M0 8h14M26 8h16M34 0v16"/></svg></div>
    </div>
    <div class="absolute left-[1541px] top-[800px] w-[340px] whitespace-nowrap text-[#bababa]">
      <div class="text-[24.300px] leading-[34px] tracking-[-0.008em]">Activate Windows</div>
      <div class="text-[17.350px] leading-[26px]">Go to Settings to activate Windows.</div>
    </div>
  </section>
  <aside class="pl-[13px] pt-[292px] flex flex-col gap-[4px]">
    <div class="w-[281px] h-[157px] rounded-[7px] border border-[#d3d3d4] bg-[linear-gradient(12deg,#f4f4ee_0%,#f0f0ec_45%,#ecebf0_80%,#eae7f4_100%)] flex items-center justify-center relative">
      <div class="absolute inset-0 rounded-[7px] bg-[radial-gradient(circle_at_7%_62%,#eff4de_0%,#eff4de00_40%)]"></div>
      <div class="relative w-[78px] h-[78px] -top-px rounded-full bg-[#e8dcd8] shadow-[0_1px_3px_rgba(0,0,0,0.2)] text-[#50301f] text-[28.500px] tracking-[0.03em] font-semibold flex items-center justify-center">UJ</div>
      <span class="absolute left-[8px] bottom-[9px] w-[105px] h-[28px] rounded-[4px] bg-[#757572] text-white text-[13px] font-semibold tracking-[0.003em] leading-[28px] text-center">Umesh Jadhav</span>
    </div>
    <div class="w-[281px] h-[156px] rounded-[7px] border border-[#cdd5d8] bg-[radial-gradient(ellipse_at_0%_0%,#f4e7ec_0%,#f4e7ec00_40%),radial-gradient(ellipse_at_0%_100%,#f5f0f4_0%,#f5f0f400_50%),radial-gradient(ellipse_at_90%_50%,#d9eeec_0%,#e2f1f0_50%,#e6ecf1_85%)] flex items-center justify-center">
      <div class="relative -top-px w-[78px] h-[77px] rounded-full bg-[#f3d6d8] text-[#6e2932] text-[28.500px] tracking-[0.02em] font-semibold flex items-center justify-center">NB</div>
    </div>
  </aside>
</main>

<!-- Taskbar -->
<footer class="h-[60px] shrink-0 border-t border-[#b4b9bf] bg-[linear-gradient(90deg,#d5d9e9_0%,#d2deea_8%,#d1dfe9_20%,#d3e4ef_30%,#dde5ea_38%,#e9eaec_45%,#f3f0ee_53%,#f2efed_74%,#f0eef0_84%,#efefef_90%,#e9e3c8_95%,#e9dfb4_100%)] flex items-center pb-px text-[14px]">
  <div class="relative ml-[25px] mt-[-2px]"><svg width="29" height="31" viewBox="0 0 29 31"><path d="M1 9l17-7 6 22-18 7z" fill="#7a4cf0"/><path d="M12 2l8-2v8h-8z" fill="#1a6fd0"/><rect x="3" y="6" width="25" height="18" rx="3" fill="url(#gNews)"/><path d="M5 14l9-6v13l-9-4z" fill="#fff"/><path d="M18 14h7M18 18h6" stroke="#fff" stroke-width="1.500"/></svg><span class="absolute left-[13px] top-[-5px] w-5 h-5 rounded-full bg-[#c42b1c] text-white text-[13px] leading-5 text-center">9</span></div>
  <div class="ml-[10px] w-[300px] leading-5 text-[14.500px]"><span class="text-[#1b1b1b] tracking-[-0.018em]">Breaking news</span><br><span class="text-[#5c6066] tracking-[0.002em]">Mumbai Wins To...</span></div>
  <svg class="w-[29px] h-[29px] ml-[166px]"><use href="#win"/></svg>
  <div class="ml-[17px] w-[273px] h-[39px] rounded-full bg-[#f5f9fb] border border-[#cdd5da] flex items-center pl-[13px] pr-[4px] text-[16px] text-[#5a5d60]"><svg class="w-[19px] h-[19px]"><use href="#mag"/></svg><span class="ml-[12px]">Search</span><svg class="w-[60px] h-[26px] ml-auto"><use href="#gear"/></svg></div>
  <div class="ml-[4px] flex">
    <div class="w-[55px] h-12 flex items-center justify-center"><svg class="w-[30px] h-[28px]"><use href="#tview"/></svg></div>
    <div class="relative w-[55px] h-12 flex items-center justify-center"><svg class="w-[30px] h-[28px]"><use href="#copilot"/></svg><span class="absolute left-[21px] top-[29px] w-[21px] h-[9px] bg-black rounded-[2px] text-white text-[7px] leading-[9px] font-bold text-center">M365</span></div>
    <div class="relative w-[55px] h-12 flex items-center justify-center"><svg class="w-[30px] h-[28px]"><use href="#folder"/></svg><i class="absolute bottom-0 w-2 h-1 rounded bg-[#868686]"></i></div>
    <div class="w-[55px] h-12 flex items-center justify-center"><svg class="w-[30px] h-[30px]"><use href="#edge"/></svg></div>
    <div class="w-[55px] h-12 flex items-center justify-center"><svg class="w-[29px] h-[30px]"><use href="#store"/></svg></div>
    <div class="relative w-[55px] h-12 flex items-center justify-center"><svg class="w-[30px] h-[30px]"><use href="#code"/></svg><i class="absolute bottom-0 w-2 h-1 rounded bg-[#868686]"></i></div>
    <div class="w-[49px] mx-[3px] h-[48px] rounded-[5px] border border-[#e3e0de] bg-[#f7f5f4]"><div class="relative w-[44px] h-full -mt-px rounded-[5px] border-r border-[#dedad8] bg-[#fbfafa] flex items-center justify-center"><svg class="w-[30px] h-[28px]"><use href="#teams"/></svg><span class="absolute left-[24px] top-[4px] w-[21px] h-[20px] rounded-full bg-[#0078d4] text-white text-[13px] leading-5 text-center font-semibold">11</span><i class="absolute bottom-0 w-5 h-1 rounded bg-[#0078d4]"></i></div></div>
    <div class="relative w-[55px] h-12 flex items-center justify-center"><svg class="w-[30px] h-[30px]"><use href="#chrome"/></svg><i class="absolute bottom-0 w-2 h-1 rounded bg-[#868686]"></i></div>
    <div class="relative w-[55px] h-12 flex items-center justify-center"><svg width="30" height="30" viewBox="0 0 30 30"><circle cx="15" cy="15" r="14.200" fill="#efe6fa" stroke="#3b1f78" stroke-width="1.500"/><circle cx="15" cy="15" r="11.500" fill="#5205c4"/><circle cx="9" cy="8.500" r="4.500" fill="#e9defa"/></svg><i class="absolute bottom-0 w-2 h-1 rounded bg-[#868686]"></i></div>
    <div class="relative w-[55px] h-12 flex items-center justify-center"><svg width="30" height="30" viewBox="0 0 30 30"><path d="M2 4l18-1 2 17H2z" fill="#e3eaee"/><path d="M4.500 16V4.500H16" fill="none" stroke="#d83b01" stroke-width="3" stroke-dasharray="3 1.500"/><path d="M16.500 8v11.500L14.500 24M9 17.500h15" fill="none" stroke="#8a8d90" stroke-width="2.600"/><circle cx="27" cy="16" r="2.500" fill="none" stroke="#1997dd" stroke-width="1.700"/><circle cx="14.500" cy="26.500" r="2.500" fill="none" stroke="#1997dd" stroke-width="1.700"/></svg><i class="absolute bottom-0 w-2 h-1 rounded bg-[#868686]"></i></div>
  </div>
  <svg class="ml-auto w-[14px] h-[8px] rotate-180"><use href="#chev"/></svg>
  <svg class="ml-[23px]" width="20" height="14" viewBox="0 0 20 14"><path d="M4.500 13.300a4 4 0 0 1-.5-8A6 6 0 0 1 14.500 4a4.700 4.700 0 0 1 1 9.300z" fill="#a9a9a9" stroke="#222" stroke-width="1.200"/><path d="M2 12l9-6 6 6.500z" fill="#dcdcdc"/></svg>
  <svg class="ml-[23px] w-[14px] h-[20px]"><use href="#micb"/></svg>
  <div class="ml-[22px] w-[38px] text-center leading-5 text-[15px] tracking-[-0.01em]">ENG<br>IN</div>
  <svg class="ml-[18px] w-5 h-4"><use href="#wifi"/></svg>
  <svg class="ml-[10px] w-5 h-4"><use href="#vol"/></svg>
  <svg class="ml-[10px] w-5 h-4"><use href="#bat"/></svg>
  <div class="ml-[6px] mr-[24px] w-[92px] text-right leading-5 text-[15px] tracking-[-0.013em]">19:20<br>04-04-2025</div>
</footer>
</body>
</html>
